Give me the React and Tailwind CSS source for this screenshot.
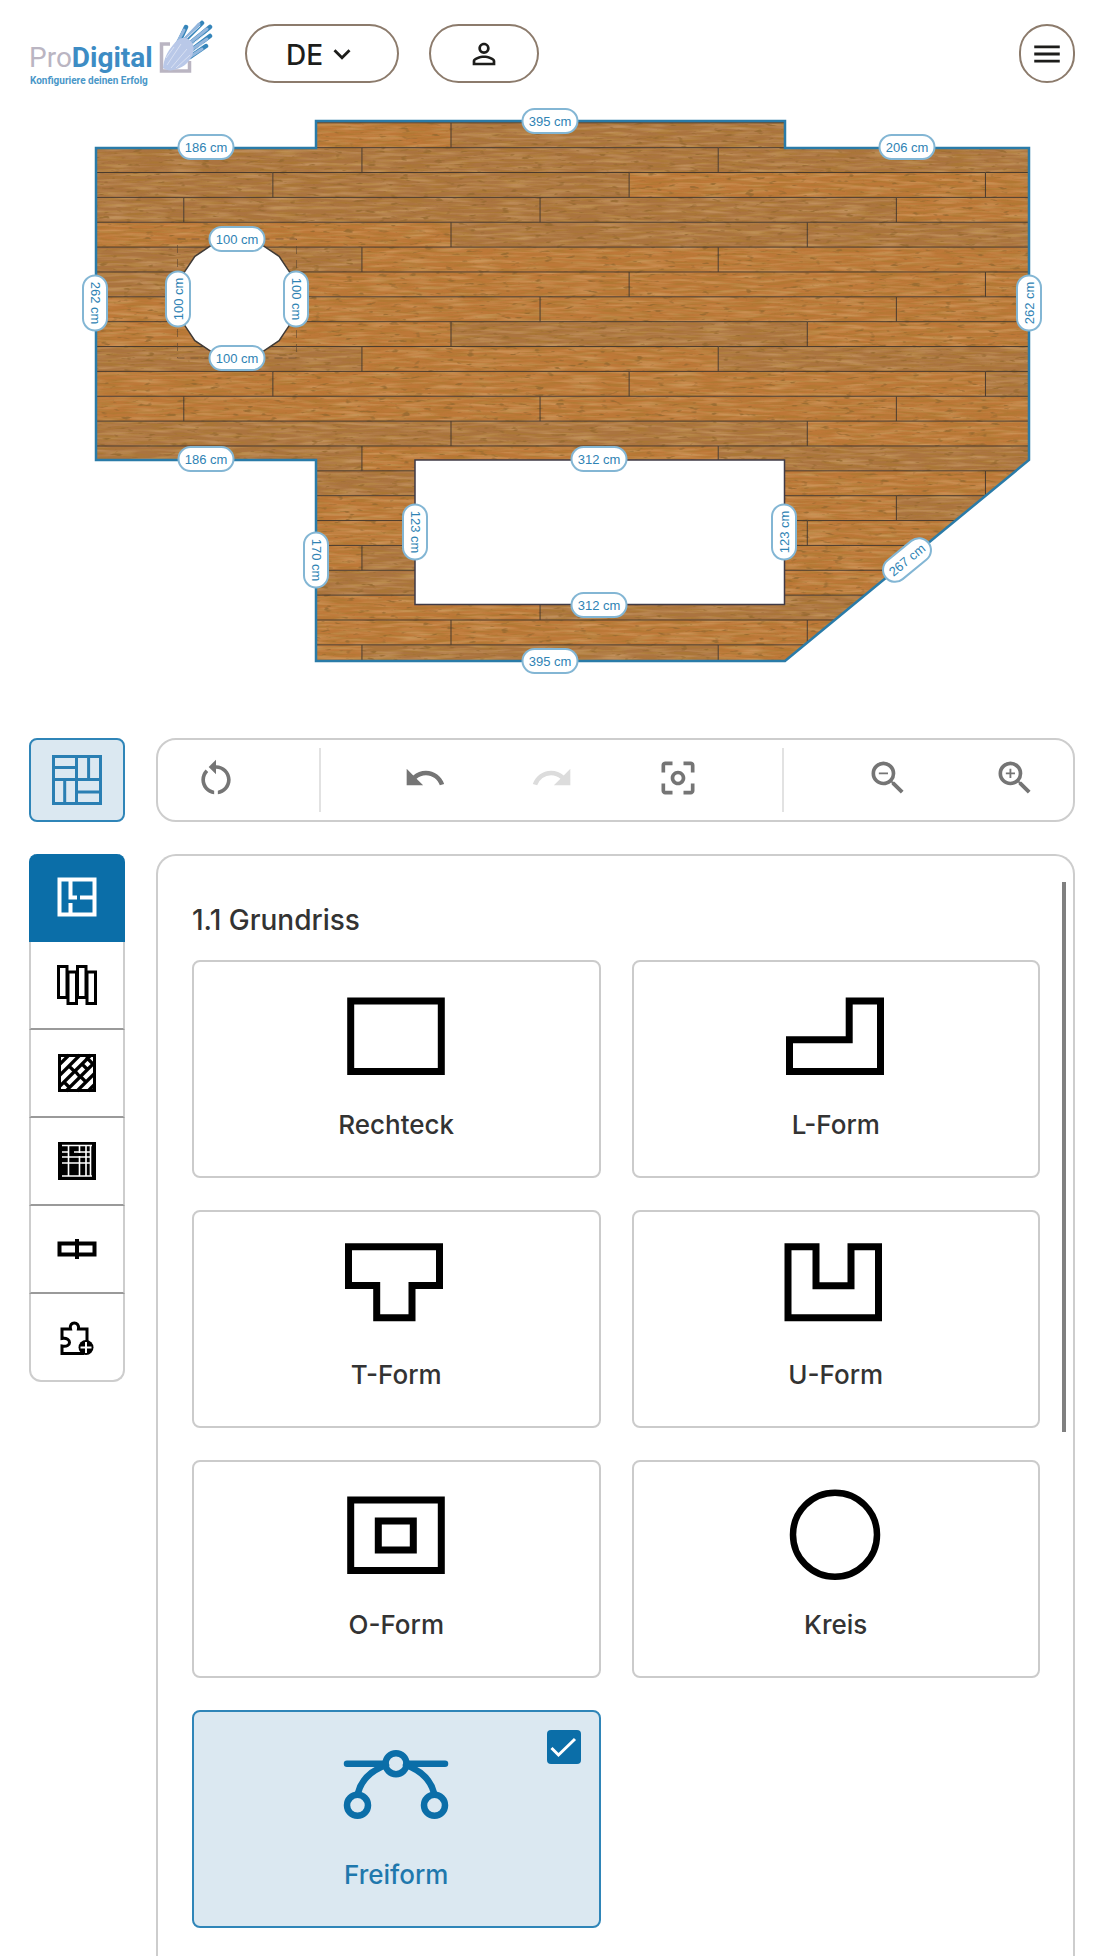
import React, { useState } from 'react';
import {
  MdCenterFocusWeak,
  MdExpandMore,
  MdMenu,
  MdPersonOutline,
  MdRedo,
  MdRestartAlt,
  MdUndo,
  MdZoomIn,
  MdZoomOut,
} from 'react-icons/md';

// Floor plan geometry
const OUTLINE = '96,148 316,148 316,121 785,121 785,148 1029,148 1029,460 785,661 316,661 316,460 96,460';
const ROW_HEIGHT = 24.86;
const PLANK_LENGTH = 356.3;
const FIRST_ROW = 122.8;

// Greyish planks per row, counted from the left edge of the row
const DULL_PLANKS = [
  [1], [0, 1, 2], [0, 1], [0, 1, 2], [1, 2], [0], [0], [], [1], [0, 2], [3],
  [], [0, 1], [0, 2], [1], [3], [], [1], [1], [2], [], [1],
];

const DIMENSIONS = [
  { text: '186 cm', x: 206, y: 147 },
  { text: '395 cm', x: 550, y: 121 },
  { text: '206 cm', x: 907, y: 147 },
  { text: '262 cm', x: 95, y: 303, angle: 90 },
  { text: '262 cm', x: 1029, y: 303, angle: -90 },
  { text: '100 cm', x: 237, y: 239 },
  { text: '100 cm', x: 237, y: 358 },
  { text: '100 cm', x: 178, y: 299, angle: -90 },
  { text: '100 cm', x: 296, y: 299, angle: 90 },
  { text: '186 cm', x: 206, y: 459 },
  { text: '170 cm', x: 316, y: 560, angle: 90 },
  { text: '312 cm', x: 599, y: 459 },
  { text: '312 cm', x: 599, y: 605 },
  { text: '123 cm', x: 415, y: 532, angle: 90 },
  { text: '123 cm', x: 784, y: 532, angle: -90 },
  { text: '395 cm', x: 550, y: 661 },
  { text: '267 cm', x: 907, y: 560, angle: -39.5 },
];

// Every row is shifted by a quarter of a plank
const planks = DULL_PLANKS.flatMap((dull, row) =>
  [0, 1, 2, 3].map((i) => ({
    key: `${row}-${i}`,
    x: 94.7 - (row % 4) * (PLANK_LENGTH / 4) + i * PLANK_LENGTH,
    y: FIRST_ROW + row * ROW_HEIGHT,
    dull: dull.includes(i),
  }))
);

const circlePoints = Array.from({ length: 16 }, (_, i) => {
  const a = (i * Math.PI) / 8;
  return `${(237 + 59.5 * Math.cos(a)).toFixed(1)},${(298.5 + 59.5 * Math.sin(a)).toFixed(1)}`;
}).join(' ');

const FloorPlan = () => (
  <svg viewBox="0 100 1100 638" className="block w-full" role="img" aria-label="Grundriss">
    <defs>
      <clipPath id="room">
        <polygon points={OUTLINE} />
      </clipPath>
      <filter id="grain" x="0" y="0" width="100%" height="100%">
        <feTurbulence type="fractalNoise" baseFrequency="0.04 0.42" numOctaves="3" seed="7" />
        <feColorMatrix values="0 0 0 0 0.4  0 0 0 0 0.19  0 0 0 0 0.03  3.6 0 0 0 -1.5" />
      </filter>
      <filter id="shine" x="0" y="0" width="100%" height="100%">
        <feTurbulence type="fractalNoise" baseFrequency="0.03 0.3" numOctaves="2" seed="21" />
        <feColorMatrix values="0 0 0 0 0.84  0 0 0 0 0.58  0 0 0 0 0.3  2.4 0 0 0 -1" />
      </filter>
      <filter id="knots" x="0" y="0" width="100%" height="100%">
        <feTurbulence type="fractalNoise" baseFrequency="0.09 0.3" numOctaves="2" seed="4" />
        <feColorMatrix values="0 0 0 0 0.3  0 0 0 0 0.14  0 0 0 0 0.03  7 0 0 0 -4.5" />
      </filter>
    </defs>

    <g clipPath="url(#room)">
      <rect x="90" y="115" width="945" height="8" fill="#bd7838" />
      {planks.map((p) => (
        <rect key={p.key} x={p.x} y={p.y} width={PLANK_LENGTH} height={ROW_HEIGHT} fill={p.dull ? '#ab7440' : '#bd7838'} />
      ))}
      <rect x="90" y="115" width="945" height="550" filter="url(#grain)" opacity="0.6" />
      <rect x="90" y="115" width="945" height="550" filter="url(#shine)" opacity="0.35" />
      <rect x="90" y="115" width="945" height="550" filter="url(#knots)" opacity="0.8" />
      {planks.map((p) => (
        <path key={p.key} d={`M${p.x} ${p.y + ROW_HEIGHT}V${p.y}H${p.x + PLANK_LENGTH}`} fill="none" stroke="#4a3a2c" strokeWidth="1" />
      ))}
    </g>

    <rect x="177.5" y="239" width="119" height="119" fill="none" stroke="#5e4630" strokeDasharray="8 6" opacity="0.6" />
    <polygon points={circlePoints} fill="#fff" stroke="#3f3a36" strokeWidth="1.5" />
    <rect x="415" y="460" width="369.5" height="144.5" fill="#fff" stroke="#3f3a46" strokeWidth="1.5" />
    <polygon points={OUTLINE} fill="none" stroke="#2a7ba8" strokeWidth="2.5" />

    {DIMENSIONS.map(({ text, x, y, angle = 0 }) => (
      <g key={`${x}-${y}`} transform={`translate(${x} ${y}) rotate(${angle})`}>
        <rect x="-27.5" y="-12" width="55" height="24" rx="12" fill="#fff" stroke="#83b6d4" strokeWidth="2" />
        <text y="4.5" textAnchor="middle" fill="#2f83b4" className="font-['Liberation_Sans',sans-serif] text-[13px]">
          {text}
        </text>
      </g>
    ))}
  </svg>
);

const Logo = () => (
  <svg viewBox="0 0 184 72" className="h-[72px] w-[184px]">
    <text x="0" y="49" className="font-[Roboto,sans-serif] text-[28px]" fill="#bab5c2">
      Pro<tspan fill="#3d8cc4" fontWeight="700">Digital</tspan>
    </text>
    <text x="1" y="66" className="font-[Roboto,sans-serif] text-[10px] font-bold" fill="#4a97c8">
      Konfiguriere deinen Erfolg
    </text>
    <path d="M141 26h-8.500v27h28v-10" fill="none" stroke="#bab5c2" strokeWidth="3.500" />
    <g strokeLinecap="round" fill="none">
      <path d="M149 26 157 9M154 24 173 5M159 27 181 9M161 33 181 18M161 39 177 28" stroke="#3585ba" strokeWidth="4.500" />
      <path d="M147 27 155 12M153 24 170 6M157 28 178 11M159 34 178 21M159 40 173 31" stroke="#93b6dd" strokeWidth="3" />
      <path d="m158 20 13-12M162 27l13-10M162 35l12-9" stroke="#dbe6f5" strokeWidth="1" />
    </g>
    <path d="M134 50c1-9 4-16 10-23 4-5 8-8 13-7 6 2 9 8 7 15-2 8-9 14-16 16-5 2-10 2-14-1Z" fill="#b9c8e8" />
    <path d="m138 47 14-21M142 50l16-19M147 50l14-13M137 40l8-11" stroke="#d9e1f3" strokeWidth="1" fill="none" />
  </svg>
);

const TilesIcon = () => (
  <svg viewBox="0 0 50 50" className="size-[50px]" fill="none" stroke="currentColor" strokeWidth="3">
    <path d="M1.500 1.500h47v47h-47zM24.500 1.500v47M1.500 24.500h47M1.500 12.600h23M36.600 1.500v23M12.700 24.500v24M24.500 37h24" />
  </svg>
);

const PlanIcon = () => (
  <svg viewBox="0 0 40 40" className="size-10" fill="none" stroke="currentColor" strokeWidth="4">
    <path d="M2.500 2.500h35v35h-35zM13.500 2v18.500H20M13.500 26v11M23 20.500h14" />
  </svg>
);

const PlanksIcon = () => (
  <svg viewBox="0 0 40 40" className="size-10" fill="none" stroke="currentColor" strokeWidth="3">
    <path d="M1.500 1.500h8.500v31H1.500zM11 7h8.500v31.500H11zM20.500 1.500H29v31h-8.500zM30 7h8.500v31.500H30z" />
  </svg>
);

const PatternIcon = () => (
  <svg viewBox="0 0 40 40" className="size-10" fill="none" stroke="currentColor">
    <path d="M2.500 2.500h35v35h-35z" strokeWidth="3" />
    <path
      d="M2 12 12 2M2 23 23 2M2 34 34 2M9 38 38 9M20 38 38 20M31 38l7-7M12 13l6 6M25 11l6 6M7 29l6 6M18 18l5 6M24 24l6 6M29 4l6 6"
      strokeWidth="3.200"
    />
  </svg>
);

const SubstructureIcon = () => (
  <svg viewBox="0 0 40 40" className="size-10">
    <rect x="1" y="1" width="38" height="38" fill="#000" />
    <path
      d="M5 4.500h30M5 11h6M17 11h17M5 16h29M5 22h29M5 35h30M11.500 4v31M22.500 4v8M22.500 15v20M29 4v31M33.500 4v31"
      stroke="#fff"
      strokeWidth="1.600"
      fill="none"
    />
  </svg>
);

const JointIcon = () => (
  <svg viewBox="0 0 40 40" className="size-10" fill="none" stroke="currentColor" strokeWidth="4">
    <path d="M2.500 14.500h35v11h-35zM20 10v20" />
  </svg>
);

const PuzzleIcon = () => (
  <svg viewBox="0 0 40 40" className="size-10" fill="none" stroke="currentColor" strokeWidth="3">
    <path d="M27 36.500H5V29c10 2 10-9 0-7.500V12h8.500c-2-8 9.500-8 8 0H30v12" />
    <circle cx="29" cy="30.500" r="7.500" fill="#000" stroke="none" />
    <path d="M29 25v11M23.500 30.500h11" stroke="#fff" strokeWidth="2" />
  </svg>
);

const STEPS = [
  { label: 'Grundriss', icon: <PlanIcon /> },
  { label: 'Dielen', icon: <PlanksIcon /> },
  { label: 'Verlegemuster', icon: <PatternIcon /> },
  { label: 'Unterkonstruktion', icon: <SubstructureIcon /> },
  { label: 'Verbindung', icon: <JointIcon /> },
  { label: 'Zubehör', icon: <PuzzleIcon /> },
];

const SHAPES = [
  { label: 'Rechteck', drawing: <path d="M9.700 15h90.600v70.500H9.700z" /> },
  { label: 'L-Form', drawing: <path d="M8.500 53.700h59.700V15h31.300v70.500h-91z" /> },
  { label: 'T-Form', drawing: <path d="M7.500 10.800h91v38.700H71v32.300H35.700V49.500H7.500z" /> },
  { label: 'U-Form', drawing: <path d="M7 10.800h28v39h35v-39h27.500v71H7z" /> },
  { label: 'O-Form', drawing: <path d="M9.700 14h90.600v70.500H9.700zM37.300 35h35v29h-35z" /> },
  { label: 'Kreis', drawing: <circle cx="54" cy="48.700" r="42" strokeWidth="6.500" /> },
  {
    label: 'Freiform',
    drawing: (
      <g strokeLinecap="round" strokeWidth="6.500">
        <path d="M6 27.700h38M66 27.700h38M17 57c3-12 12-22 28-28M93 57c-3-12-12-22-28-28" />
        <circle cx="55" cy="27.700" r="10.500" />
        <circle cx="16.500" cy="69.300" r="10.500" />
        <circle cx="93.500" cy="69.300" r="10.500" />
      </g>
    ),
  },
];

const ToolButton = ({ label, icon: Icon, disabled }) => (
  <button aria-label={label} disabled={disabled} className="text-[#757575] disabled:text-[#dcdcdc]">
    <Icon className="size-11" />
  </button>
);

const ShapeCard = ({ label, drawing, checked, onSelect }) => (
  <label
    className={`relative flex h-[218px] cursor-pointer flex-col items-center gap-[23px] rounded-lg border-2 pt-6 ${
      checked ? 'border-[#2f85b8] bg-[#dbe8f1] text-[#0b6ea8]' : 'border-[#cbcbcb] bg-white text-black'
    }`}
  >
    <svg viewBox="0 0 110 100" className="h-[100px] w-[110px]" fill="none" stroke="currentColor" strokeWidth="7">
      {drawing}
    </svg>
    <span className={`text-[26px] leading-8 font-medium ${checked ? 'text-[#1f78ad]' : 'text-[#333]'}`}>{label}</span>
    <input
      type="checkbox"
      checked={checked}
      onChange={onSelect}
      className="absolute top-[18px] right-[18px] size-[34px] appearance-none rounded-sm opacity-0 checked:bg-[#0b6ea8] checked:opacity-100"
    />
    {checked && (
      <svg viewBox="0 0 34 34" className="pointer-events-none absolute top-[18px] right-[18px] size-[34px]">
        <path d="m4.500 18 7 7L28 9" fill="none" stroke="#fff" strokeWidth="3" />
      </svg>
    )}
  </label>
);

const App = () => {
  const [shape, setShape] = useState('Freiform');
  const [step, setStep] = useState('Grundriss');

  return (
    <div className="flex min-h-screen flex-col bg-white font-['Inter',sans-serif]">
      <header className="flex h-[100px] items-start pt-6 pr-[25px] pl-[29px] text-[#1d1d1b]">
        <a href="#" aria-label="ProDigital" className="-mt-1.5 mr-8">
          <Logo />
        </a>
        <div className="relative mr-[30px] h-[59px] w-[154px]">
          <select
            aria-label="Sprache"
            className="h-full w-full appearance-none rounded-full border-2 border-[#8c7b6c] bg-white pt-0.5 pl-[39px] text-[28px] font-medium"
          >
            <option>DE</option>
            <option>EN</option>
          </select>
          <MdExpandMore className="pointer-events-none absolute top-[13px] right-10 size-[34px]" />
        </div>
        <button aria-label="Konto" className="flex h-[59px] w-[110px] items-center justify-center rounded-full border-2 border-[#8c7b6c]">
          <MdPersonOutline className="size-[34px]" />
        </button>
        <button aria-label="Menü" className="ml-auto flex h-[59px] w-14 items-center justify-center rounded-full border-2 border-[#8c7b6c]">
          <MdMenu className="size-[34px]" />
        </button>
      </header>

      <FloorPlan />

      <main className="grid flex-1 grid-cols-[96px_1fr] grid-rows-[84px_1fr] gap-x-[31px] gap-y-8 pr-[25px] pl-[29px]">
        <button aria-label="Belag" className="flex items-center justify-center rounded-lg border-2 border-[#2f85b8] bg-[#dbe8f1] text-[#2a7fb3]">
          <TilesIcon />
        </button>

        {/* Canvas tools */}
        <div className="grid grid-cols-[163fr_463fr_289fr] items-center rounded-[20px] border-2 border-[#cdcdcd]">
          <div className="flex h-16 items-center border-r-2 border-[#e2e2e2] pb-1 pl-9">
            <ToolButton label="Zurücksetzen" icon={MdRestartAlt} />
          </div>
          <div className="flex h-16 items-center justify-between border-r-2 border-[#e2e2e2] px-[82px] pb-1">
            <ToolButton label="Rückgängig" icon={MdUndo} />
            <ToolButton label="Wiederholen" icon={MdRedo} disabled />
            <ToolButton label="Zentrieren" icon={MdCenterFocusWeak} />
          </div>
          <div className="flex h-16 items-center justify-between pr-9 pb-1 pl-[82px]">
            <ToolButton label="Verkleinern" icon={MdZoomOut} />
            <ToolButton label="Vergrößern" icon={MdZoomIn} />
          </div>
        </div>

        {/* Steps */}
        <nav className="flex flex-col self-start rounded-lg">
          {STEPS.map((s) => (
            <button
              key={s.label}
              aria-label={s.label}
              onClick={() => setStep(s.label)}
              className={`flex h-[88px] items-center justify-center border-x-2 border-b-2 first:rounded-t-lg last:rounded-b-xl last:border-b-[#cdcdcd] ${
                step === s.label ? 'border-[#0b6ea8] bg-[#0b6ea8] text-white' : 'border-x-[#cdcdcd] border-b-[#9a9a9a] text-black'
              }`}
            >
              {s.icon}
            </button>
          ))}
        </nav>

        <section className="relative rounded-t-[20px] border-2 border-b-0 border-[#cdcdcd] pt-12 pr-[33px] pb-7 pl-[34px]">
          <h2 className="text-[28px] leading-8 font-medium text-[#333]">1.1 Grundriss</h2>
          <div className="mt-6 grid grid-cols-2 gap-x-[31px] gap-y-8">
            {SHAPES.map((s) => (
              <ShapeCard
                key={s.label}
                label={s.label}
                drawing={s.drawing}
                checked={shape === s.label}
                onSelect={() => setShape(s.label)}
              />
            ))}
          </div>
          <div className="absolute top-[26px] right-[7px] h-[550px] w-1 bg-[#808080]" />
        </section>
      </main>
    </div>
  );
};

export default App;
